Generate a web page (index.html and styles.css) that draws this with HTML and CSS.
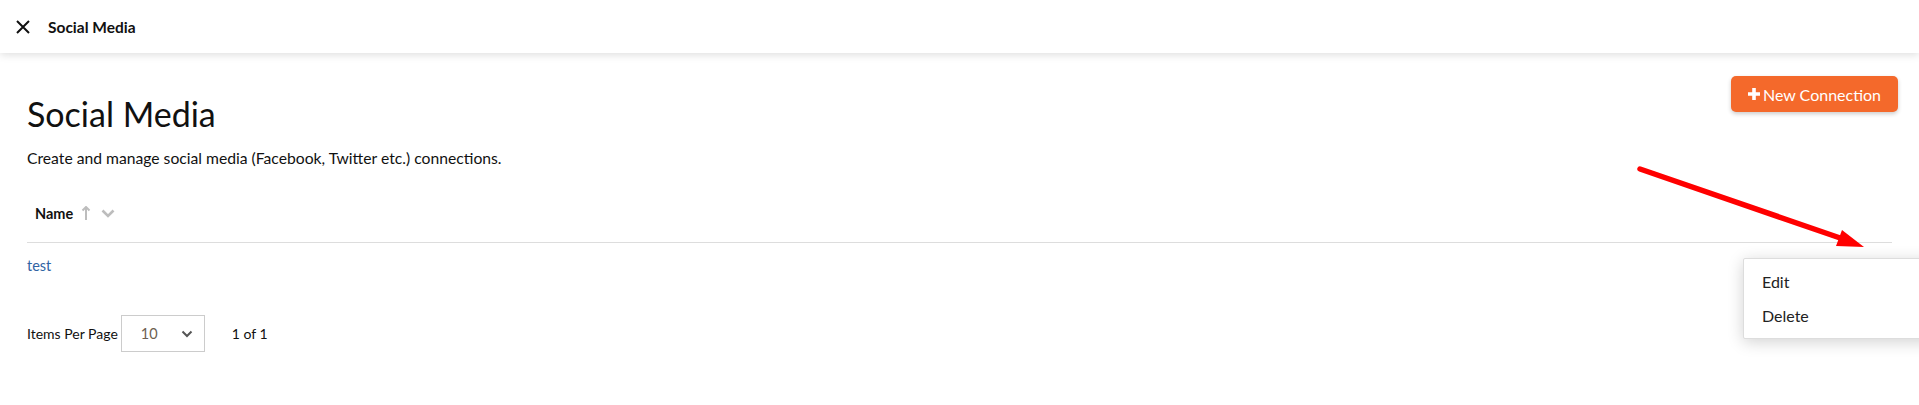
FILE: index.html
```html
<!DOCTYPE html>
<html lang="en">
  <head>
    <meta charset="UTF-8" />
    <title>Social Media</title>
    <link rel="stylesheet" href="styles.css">
  </head>
  <body>
    <header class="topbar">
      <svg class="close-icon" width="16" height="16" viewBox="0 0 16 16">
        <path d="M2 2 L14 14 M14 2 L2 14" stroke="#111" stroke-width="2" fill="none"/>
      </svg>
      <span class="topbar-title">Social Media</span>
    </header>

    <main class="page">
      <div class="page-head">
        <div>
          <h1>Social Media</h1>
          <p class="lead">Create and manage social media (Facebook, Twitter etc.) connections.</p>
        </div>
        <button class="btn-new" type="button">
          <svg width="12" height="12" viewBox="0 0 12 12"><path d="M4.2 0h3.6v4.2H12v3.6H7.8V12H4.2V7.8H0V4.2h4.2z" fill="#fff"/></svg>
          New Connection
        </button>
      </div>

      <table class="grid">
        <thead>
          <tr>
            <th>
              <span class="th-label">Name</span>
              <svg class="sort-up" width="10" height="15" viewBox="0 0 10 15"><path d="M5 1 L5 14 M1.5 4.5 L5 1 L8.5 4.5" stroke="#bdbdbd" stroke-width="2" fill="none"/></svg>
              <svg class="sort-down" width="14" height="9" viewBox="0 0 14 9"><path d="M1.5 1.5 L7 7 L12.5 1.5" stroke="#bdbdbd" stroke-width="2.6" fill="none"/></svg>
            </th>
            <th></th>
          </tr>
        </thead>
        <tbody>
          <tr>
            <td><a href="#" class="link">test</a></td>
            <td class="actions">
              <span class="kebab"><i></i><i></i><i></i></span>
            </td>
          </tr>
        </tbody>
      </table>

      <div class="pager">
        <span>Items Per Page</span>
        <div class="select">
          <span class="select-value">10</span>
          <svg width="12" height="8" viewBox="0 0 12 8"><path d="M1.5 1.5 L6 6 L10.5 1.5" stroke="#555" stroke-width="2" fill="none"/></svg>
        </div>
        <span class="page-count">1 of 1</span>
      </div>
    </main>

    <div class="menu">
      <div class="menu-item">Edit</div>
      <div class="menu-item">Delete</div>
    </div>

    <svg class="annotation" width="1919" height="405" viewBox="0 0 1919 405">
      <line x1="1640" y1="169" x2="1846" y2="240" stroke="#ff0000" stroke-width="5.5" stroke-linecap="round"/>
      <polygon points="1864,247 1842,230 1836,246" fill="#ff0000"/>
    </svg>
  </body>
</html>
```

FILE: styles.css
```css
* { box-sizing: border-box; }
html, body {
  margin: 0;
  height: 100%;
}
body {
  font-family: 'Lato', 'Liberation Sans', sans-serif;
  color: #111;
  background: #fff;
  overflow: hidden;
  position: relative;
}
.topbar {
  height: 53px;
  display: flex;
  align-items: center;
  gap: 17px;
  padding-left: 15px;
  box-shadow: 0 2px 8px rgba(0,0,0,0.13);
  position: relative;
  z-index: 1;
}
.close-icon { display: block; margin-top: 1px; }
.topbar-title {
  font-weight: 700;
  font-size: 15.5px;
}
.page {
  padding: 23px 21px 0 27px;
}
.page-head {
  display: flex;
  justify-content: space-between;
  align-items: flex-start;
}
h1 {
  font-size: 34px;
  font-weight: 400;
  line-height: 40px;
  margin: 18px 0 0;
}
.lead {
  font-size: 15.7px;
  line-height: 20px;
  margin: 14px 0 0;
}
.btn-new {
  display: flex;
  align-items: center;
  gap: 3px;
  width: 167px;
  height: 36px;
  justify-content: center;
  background: #f4692b;
  color: #fff;
  border: none;
  border-radius: 5px;
  font-family: inherit;
  font-size: 16px;
  box-shadow: 0 2px 4px rgba(0,0,0,0.2);
  padding: 0 8px;
}
.grid {
  width: calc(100% - 6px);
  border-collapse: collapse;
  margin-top: 20px;
}
.grid th {
  text-align: left;
  height: 54px;
  padding: 0 8px 5px;
  border-bottom: 1px solid #ddd;
  white-space: nowrap;
}
.th-label {
  font-size: 14.5px;
  font-weight: 700;
  vertical-align: middle;
}
.sort-up {
  vertical-align: middle;
  margin-left: 4px;
}
.sort-down {
  vertical-align: middle;
  margin-left: 6px;
}
.grid td {
  height: 46px;
  padding: 0;
  font-size: 14.5px;
}
.link {
  color: #2f64a3;
  text-decoration: none;
}
.actions {
  text-align: right;
  width: 40px;
  vertical-align: top;
  padding-top: 11px !important;
}
.kebab {
  display: inline-flex;
  flex-direction: column;
  gap: 3px;
  margin-right: 9px;
}
.kebab i {
  display: block;
  width: 3px;
  height: 3px;
  border-radius: 50%;
  background: #111;
}
.pager {
  display: flex;
  align-items: center;
  margin-top: 27px;
  font-size: 14px;
}
.select {
  width: 84px;
  height: 37px;
  border: 1px solid #ccc;
  display: flex;
  align-items: center;
  justify-content: space-between;
  padding: 0 11px 0 19px;
  margin-left: 3px;
}
.select-value {
  color: #6e5f50;
  font-size: 14.5px;
}
.page-count {
  margin-left: 27px;
}
.menu {
  position: absolute;
  top: 258px;
  left: 1743px;
  width: 210px;
  padding: 6px 0 5px;
  background: #fff;
  border: 1px solid #ddd;
  border-radius: 2px;
  box-shadow: 0 3px 16px rgba(0,0,0,0.18);
}
.menu-item {
  height: 34px;
  line-height: 33px;
  padding-left: 18px;
  font-size: 16px;
  color: #222;
}
.annotation {
  position: absolute;
  top: 0;
  left: 0;
  pointer-events: none;
}
```
